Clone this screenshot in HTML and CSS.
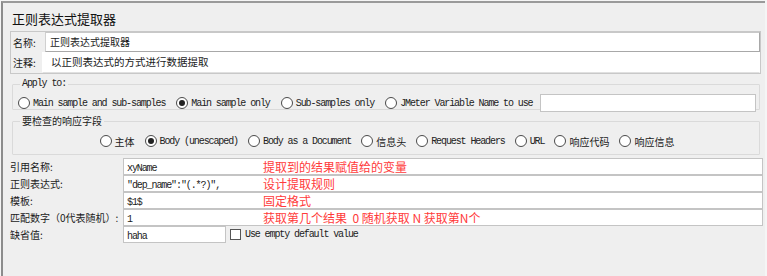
FILE: index.html
```html
<!DOCTYPE html>
<html lang="zh-CN">
<head>
    <meta charset="UTF-8">
    <title>正则表达式提取器</title>
    <link rel="stylesheet" href="styles.css">
</head>
<body>
    <div class="panel">
        <!-- タイトル -->
        <div class="title">正则表达式提取器</div>

        <!-- 名称・注释 -->
        <div class="name-box">
            <div class="name-row">
                <span class="name-label">名称:</span>
                <div class="name-input focus">正则表达式提取器</div>
            </div>
            <div class="name-row">
                <span class="name-label">注释:</span>
                <div class="name-input comment">以正则表达式的方式进行数据提取</div>
            </div>
        </div>

        <!-- Apply to -->
        <fieldset class="group apply">
            <legend class="mono">Apply to:</legend>
            <div class="radio-row">
                <label class="opt"><span class="radio"></span><span class="mono">Main sample and sub-samples</span></label>
                <label class="opt"><span class="radio on"></span><span class="mono">Main sample only</span></label>
                <label class="opt"><span class="radio"></span><span class="mono">Sub-samples only</span></label>
                <label class="opt"><span class="radio"></span><span class="mono">JMeter Variable Name to use</span></label>
                <div class="var-input"></div>
            </div>
        </fieldset>

        <!-- 要检查的响应字段 -->
        <fieldset class="group fields">
            <legend>要检查的响应字段</legend>
            <div class="radio-row center">
                <label class="opt"><span class="radio"></span><span>主体</span></label>
                <label class="opt"><span class="radio on"></span><span class="mono">Body (unescaped)</span></label>
                <label class="opt"><span class="radio"></span><span class="mono">Body as a Document</span></label>
                <label class="opt"><span class="radio"></span><span>信息头</span></label>
                <label class="opt"><span class="radio"></span><span class="mono">Request Headers</span></label>
                <label class="opt"><span class="radio"></span><span class="mono">URL</span></label>
                <label class="opt"><span class="radio"></span><span>响应代码</span></label>
                <label class="opt"><span class="radio"></span><span>响应信息</span></label>
            </div>
        </fieldset>

        <!-- 設定行 -->
        <div class="rows">
            <div class="row">
                <span class="row-label">引用名称:</span>
                <div class="row-input"><span class="mono">xyName</span><span class="note">提取到的结果赋值给的变量</span></div>
            </div>
            <div class="row">
                <span class="row-label">正则表达式:</span>
                <div class="row-input"><span class="mono">"dep_name":"(.*?)",</span><span class="note">设计提取规则</span></div>
            </div>
            <div class="row">
                <span class="row-label">模板:</span>
                <div class="row-input"><span class="mono">$1$</span><span class="note">固定格式</span></div>
            </div>
            <div class="row">
                <span class="row-label">匹配数字（0代表随机）:</span>
                <div class="row-input"><span class="mono">1</span><span class="note">获取第几个结果&nbsp;&nbsp;0 随机获取 N 获取第N个</span></div>
            </div>
            <div class="row">
                <span class="row-label">缺省值:</span>
                <div class="row-input short"><span class="mono">haha</span></div>
                <label class="check"><span class="box"></span><span class="mono">Use empty default value</span></label>
            </div>
        </div>
    </div>
</body>
</html>
```

FILE: styles.css
```css
/* === ベース === */
body {
    margin: 0;
    background: #f5f5f5;
    font-family: "Noto Sans CJK SC", "Noto Sans", sans-serif;
    font-size: 10px;
    color: #1a1a1a;
}

.panel {
    margin: 1px 0 0 1px;
    width: 762px;
    height: 273px;
    background: #efefef;
    border-left: 2px solid #8c8c8c;
    border-top: 2px solid #9a9a9a;
}

/* 等幅テキスト（SimSun風） */
.mono {
    font-family: "Liberation Mono", "DejaVu Sans Mono", monospace;
    font-size: 10px;
    letter-spacing: -1.1px;
    color: #222;
    white-space: nowrap;
}

.title {
    margin: 6px 0 2px 9px;
    height: 20px;
    line-height: 20px;
    font-size: 13px;
    color: #111;
}

/* === 名称・注释 === */
.name-box {
    margin-left: 7px;
    width: 749px;
    border: 1px solid #c8c8c8;
}

.name-row {
    display: flex;
    align-items: center;
    height: 20px;
}

.name-row + .name-row {
    height: 21px;
}

.name-label {
    width: 34px;
    padding-left: 2px;
    box-sizing: border-box;
    white-space: nowrap;
}

.name-input {
    flex: 1;
    height: 100%;
    box-sizing: border-box;
    background: #fff;
    padding-left: 4px;
    line-height: 18px;
    font-size: 10.5px;
    border: 1px solid #d4d4d4;
}

.name-input.focus {
    font-size: 10px;
    border-color: #c8c8c8 #a8a8a8 #a8a8a8 #d0d0d0;
}

.name-input.comment {
    margin-left: -3px;
    padding-left: 8px;
    border-color: #fff;
    border-bottom-color: #e0e0e0;
}

/* === グループ枠 === */
.group {
    margin: 0 0 0 9px;
    width: 748px;
    box-sizing: border-box;
    border: 1px solid #dadada;
    border-radius: 1px;
}

.group legend {
    padding: 0 2px;
    margin-left: 2px;
    line-height: 10px;
}

.apply {
    margin-top: 5px;
    height: 31px;
    padding: 5px 3px 0 5px;
}

.fields {
    margin-top: 6px;
    height: 39px;
    padding: 6px 3px 0 5px;
}

.radio-row {
    display: flex;
    align-items: center;
    gap: 11px;
    height: 18px;
}

.radio-row.center {
    justify-content: center;
    gap: 10px;
}

.opt {
    display: flex;
    align-items: center;
    gap: 3px;
    white-space: nowrap;
}

.radio {
    flex: none;
    width: 10px;
    height: 10px;
    border: 1px solid #4a4a4a;
    border-radius: 50%;
    background: #fff;
    position: relative;
}

.radio.on::after {
    content: "";
    position: absolute;
    left: 2px;
    top: 2px;
    width: 6px;
    height: 6px;
    border-radius: 50%;
    background: #222;
}

.var-input {
    flex: 1;
    height: 18px;
    margin-left: -4px;
    box-sizing: border-box;
    background: #fff;
    border: 1px solid #c4c4c4;
}

/* === 設定行 === */
.rows {
    margin-top: 3px;
}

.row {
    display: flex;
    align-items: center;
    height: 17px;
}

.row-label {
    flex: none;
    width: 120px;
    padding-left: 7px;
    box-sizing: border-box;
    white-space: nowrap;
}

.row-input {
    position: relative; /* 注釈の基準 */
    width: 640px;
    height: 17px;
    box-sizing: border-box;
    background: #fff;
    border: 1px solid #c4c4c4;
    padding-left: 3px;
    line-height: 16px;
}

.row-input.short {
    width: 103px;
}

/* 赤い注釈（入力欄の上に書き込み） */
.note {
    position: absolute;
    left: 139px;
    top: -1px;
    font-size: 12px;
    line-height: 17px;
    color: #ff3b3b;
    white-space: nowrap;
}

.check {
    display: flex;
    align-items: center;
    gap: 4px;
    margin-left: 4px;
}

.box {
    width: 9px;
    height: 9px;
    border: 1px solid #555;
    background: #fff;
}
```
